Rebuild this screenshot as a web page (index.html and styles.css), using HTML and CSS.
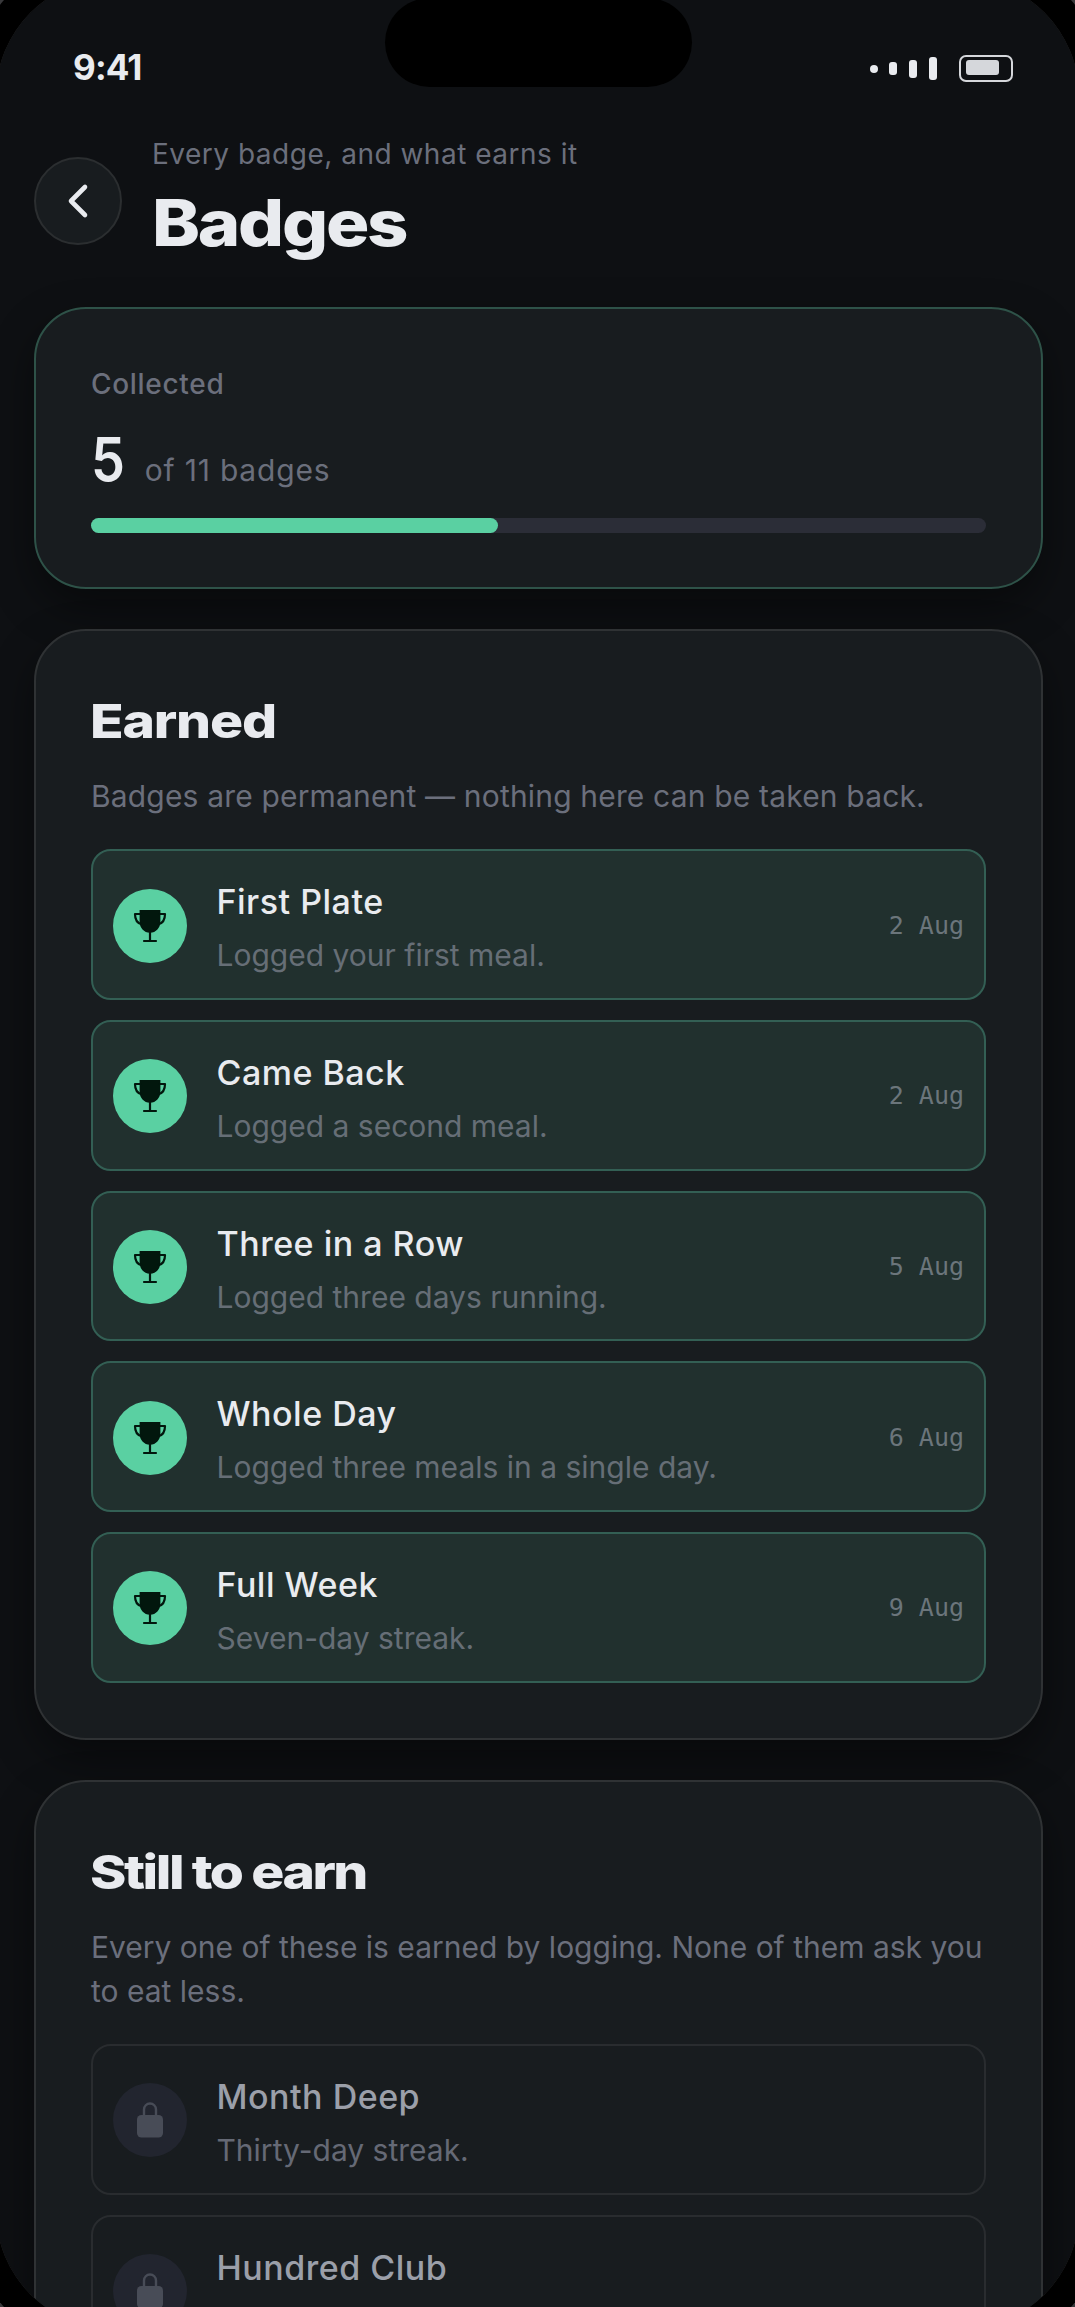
FILE: index.html
```html
<!DOCTYPE html>
<html lang="en">
<head>
<meta charset="utf-8">
<title>Badges</title>
<link rel="stylesheet" href="styles.css">
</head>
<body>
<svg class="sprite" width="0" height="0" aria-hidden="true">
  <symbol id="trophy" viewBox="0 0 34 34">
    <path d="M6.600 1h20.800v11.500c0 6.200-4.400 11.300-10.400 11.300s-10.400-5.100-10.400-11.300z" fill="currentColor"/>
    <path d="M8 5H2c0 5 1.800 9 6.500 10.300M26 5h6c0 5-1.800 9-6.500 10.300M17 22v10M11 32h12" fill="none" stroke="currentColor" stroke-width="2.200" stroke-linecap="round" stroke-linejoin="round"/>
  </symbol>
  <symbol id="lock" viewBox="0 0 28 36">
    <rect x="1" y="13" width="26" height="22.500" rx="4.500" fill="currentColor"/>
    <path d="M8 14V7.500a6 6 0 0 1 12 0V14" fill="none" stroke="currentColor" stroke-width="2.400"/>
  </symbol>
</svg>
<div class="screen">
  <div class="status">
    <span class="time">9:41</span>
    <div class="indicators">
      <div class="signal"><i class="b1"></i><i class="b2"></i><i class="b3"></i><i class="b4"></i></div>
      <div class="battery"><i></i></div>
    </div>
  </div>
  <header class="header">
    <button class="back" aria-label="Back">
      <svg width="24" height="36" viewBox="0 0 24 36"><path d="M19 4 5 18l14 14" fill="none" stroke="currentColor" stroke-width="4.600" stroke-linecap="round" stroke-linejoin="round"/></svg>
    </button>
    <div>
      <p class="tagline">Every badge, and what earns it</p>
      <h1 class="title">Badges</h1>
    </div>
  </header>
  <main class="cards">
    <section class="card card-summary">
      <p class="label">Collected</p>
      <p class="count"><span class="num">5</span><span class="total">of 11 badges</span></p>
      <div class="track"><div class="fill" style="width:45.45%"></div></div>
    </section>
    <section class="card">
      <h2 class="heading">Earned</h2>
      <p class="desc desc-earned">Badges are permanent — nothing here can be taken back.</p>
      <ul class="list">
        <li class="row earned"><span class="icon"><svg width="34" height="34"><use href="#trophy"/></svg></span><div class="text"><p class="name">First Plate</p><p class="sub">Logged your first meal.</p></div><time class="date">2 Aug</time></li>
        <li class="row earned"><span class="icon"><svg width="34" height="34"><use href="#trophy"/></svg></span><div class="text"><p class="name">Came Back</p><p class="sub">Logged a second meal.</p></div><time class="date">2 Aug</time></li>
        <li class="row earned"><span class="icon"><svg width="34" height="34"><use href="#trophy"/></svg></span><div class="text"><p class="name">Three in a Row</p><p class="sub">Logged three days running.</p></div><time class="date">5 Aug</time></li>
        <li class="row earned"><span class="icon"><svg width="34" height="34"><use href="#trophy"/></svg></span><div class="text"><p class="name">Whole Day</p><p class="sub">Logged three meals in a single day.</p></div><time class="date">6 Aug</time></li>
        <li class="row earned"><span class="icon"><svg width="34" height="34"><use href="#trophy"/></svg></span><div class="text"><p class="name">Full Week</p><p class="sub">Seven-day streak.</p></div><time class="date">9 Aug</time></li>
      </ul>
    </section>
    <section class="card">
      <h2 class="heading heading-next">Still to earn</h2>
      <p class="desc">Every one of these is earned by logging. None of them ask you<br>to eat less.</p>
      <ul class="list">
        <li class="row locked"><span class="icon"><svg width="28" height="36"><use href="#lock"/></svg></span><div class="text"><p class="name">Month Deep</p><p class="sub">Thirty-day streak.</p></div></li>
        <li class="row locked"><span class="icon"><svg width="28" height="36"><use href="#lock"/></svg></span><div class="text"><p class="name">Hundred Club</p></div></li>
      </ul>
    </section>
  </main>
</div>
<div class="island"></div>
<div class="bezel"></div>
</body>
</html>
```
FILE: styles.css
```css
* { box-sizing: border-box; margin: 0; padding: 0; }
html, body { height: 2307px; overflow: hidden; background: #0e1013; }
body {
  position: relative;
  width: 1075px;
  font-family: Inter, "Liberation Sans", sans-serif;
  color: #e9ebef;
}
.sprite { position: absolute; }
.screen { height: 2307px; overflow: hidden; }

/* Device chrome that lies over the page */
.island {
  position: absolute;
  top: -2px;
  left: 385px;
  width: 307px;
  height: 89px;
  border-radius: 45px;
  background: #000;
}
.bezel {
  position: absolute;
  inset: -22px -4px;
  border-radius: 118px;
  box-shadow: 0 0 0 28px #000, 0 0 0 70px #39393b;
  pointer-events: none;
}

.status {
  display: flex;
  justify-content: space-between;
  align-items: center;
  height: 137px;
  padding: 0 62px 0 73px;
}
.time { font-size: 35px; line-height: 44px; font-weight: 700; padding-bottom: 3px; letter-spacing: -.8px; }
.indicators { display: flex; align-items: center; gap: 22px; }
.signal { display: flex; align-items: center; gap: 11.800px; }
.signal i { width: 8px; border-radius: 3px; background: #e9ebef; }
.signal .b1 { height: 8px; border-radius: 4px; }
.signal .b2 { height: 13px; }
.signal .b3 { height: 18px; }
.signal .b4 { height: 23px; }
.battery {
  width: 54px;
  height: 27px;
  padding: 3px 5px;
  border: 2px solid #d5d7db;
  border-radius: 7px;
}
.battery i { display: block; width: 33px; height: 15px; border-radius: 3px; background: #d5d7db; }

.header { display: flex; align-items: center; gap: 30px; padding-left: 34px; }
.back {
  display: flex;
  align-items: center;
  justify-content: center;
  width: 88px;
  height: 88px;
  margin-top: 7px;
  padding-right: 1px;
  border: 2px solid #2b2e30;
  border-radius: 50%;
  background: #181c1f;
  color: #e9ebef;
}
.tagline { font-size: 28px; line-height: 34px; letter-spacing: .5px; color: #6b6f7c; }
.title {
  margin-top: 17px;
  font-size: 64px;
  line-height: 70px;
  font-weight: 800;
  letter-spacing: -2px;
  transform: scaleX(1.13);
  transform-origin: 0 50%;
}

.cards { display: flex; flex-direction: column; gap: 40px; padding: 49.300px 32px 0 34px; }
.card {
  padding: 62px 55px 55px;
  border: 2px solid #2f3234;
  border-radius: 52px;
  background: #181c1f;
  box-shadow: 0 18px 44px rgba(0, 0, 0, .42);
}
.card-summary { padding-top: 57.300px; padding-bottom: 54.300px; border-color: #2e5248; }
.label { font-size: 28px; line-height: 34px; font-weight: 500; letter-spacing: .7px; color: #6b6f7c; }
.count { display: flex; align-items: baseline; gap: 16px; margin-top: 28.600px; }
.num { font-size: 60px; line-height: 60px; font-weight: 600; transform: scaleX(.9); transform-origin: 0 50%; }
.total { font-size: 30px; line-height: 38px; letter-spacing: .8px; color: #6b6f7c; }
.track { height: 14.700px; margin-top: 28.800px; border-radius: 8px; background: #2b2d37; }
.fill { height: 100%; border-radius: 8px; background: #5ad0a2; }

.heading {
  margin-left: -1px;
  font-size: 47px;
  line-height: 56px;
  font-weight: 800;
  letter-spacing: -1px;
  transform: scaleX(1.175);
  transform-origin: 0 50%;
}
.heading-next { letter-spacing: -2.100px; }
.desc { margin-top: 25.200px; font-size: 30px; line-height: 44px; color: #6b6f7c; white-space: nowrap; }
.desc-earned { letter-spacing: .17px; }
.list { display: flex; flex-direction: column; gap: 20.100px; margin-top: 31.200px; list-style: none; }
.row {
  display: flex;
  align-items: center;
  height: 150.600px;
  padding: 2px 20px 0;
  border: 2px solid #335f54;
  border-radius: 20px;
  background: #21302e;
}
.icon {
  display: flex;
  align-items: center;
  justify-content: center;
  width: 74px;
  height: 74px;
  margin-right: 29.500px;
  border-radius: 50%;
  background: #5ad0a2;
  color: #02170d;
}
.text { flex: 1; height: 93px; margin-top: 4px; }
.name { font-size: 34px; line-height: 42px; font-weight: 500; letter-spacing: .5px; }
.sub { margin-top: 13.200px; font-size: 30px; line-height: 38px; color: #666e76; }
.date { font: 25px/30px "DejaVu Sans Mono", monospace; color: #6b757b; }
.locked { border-color: #292c2f; background: none; }
.locked .icon { background: #22252f; color: #484c57; }
.locked .name { color: #9b9fa9; }
.locked .sub { color: #656975; }
```
